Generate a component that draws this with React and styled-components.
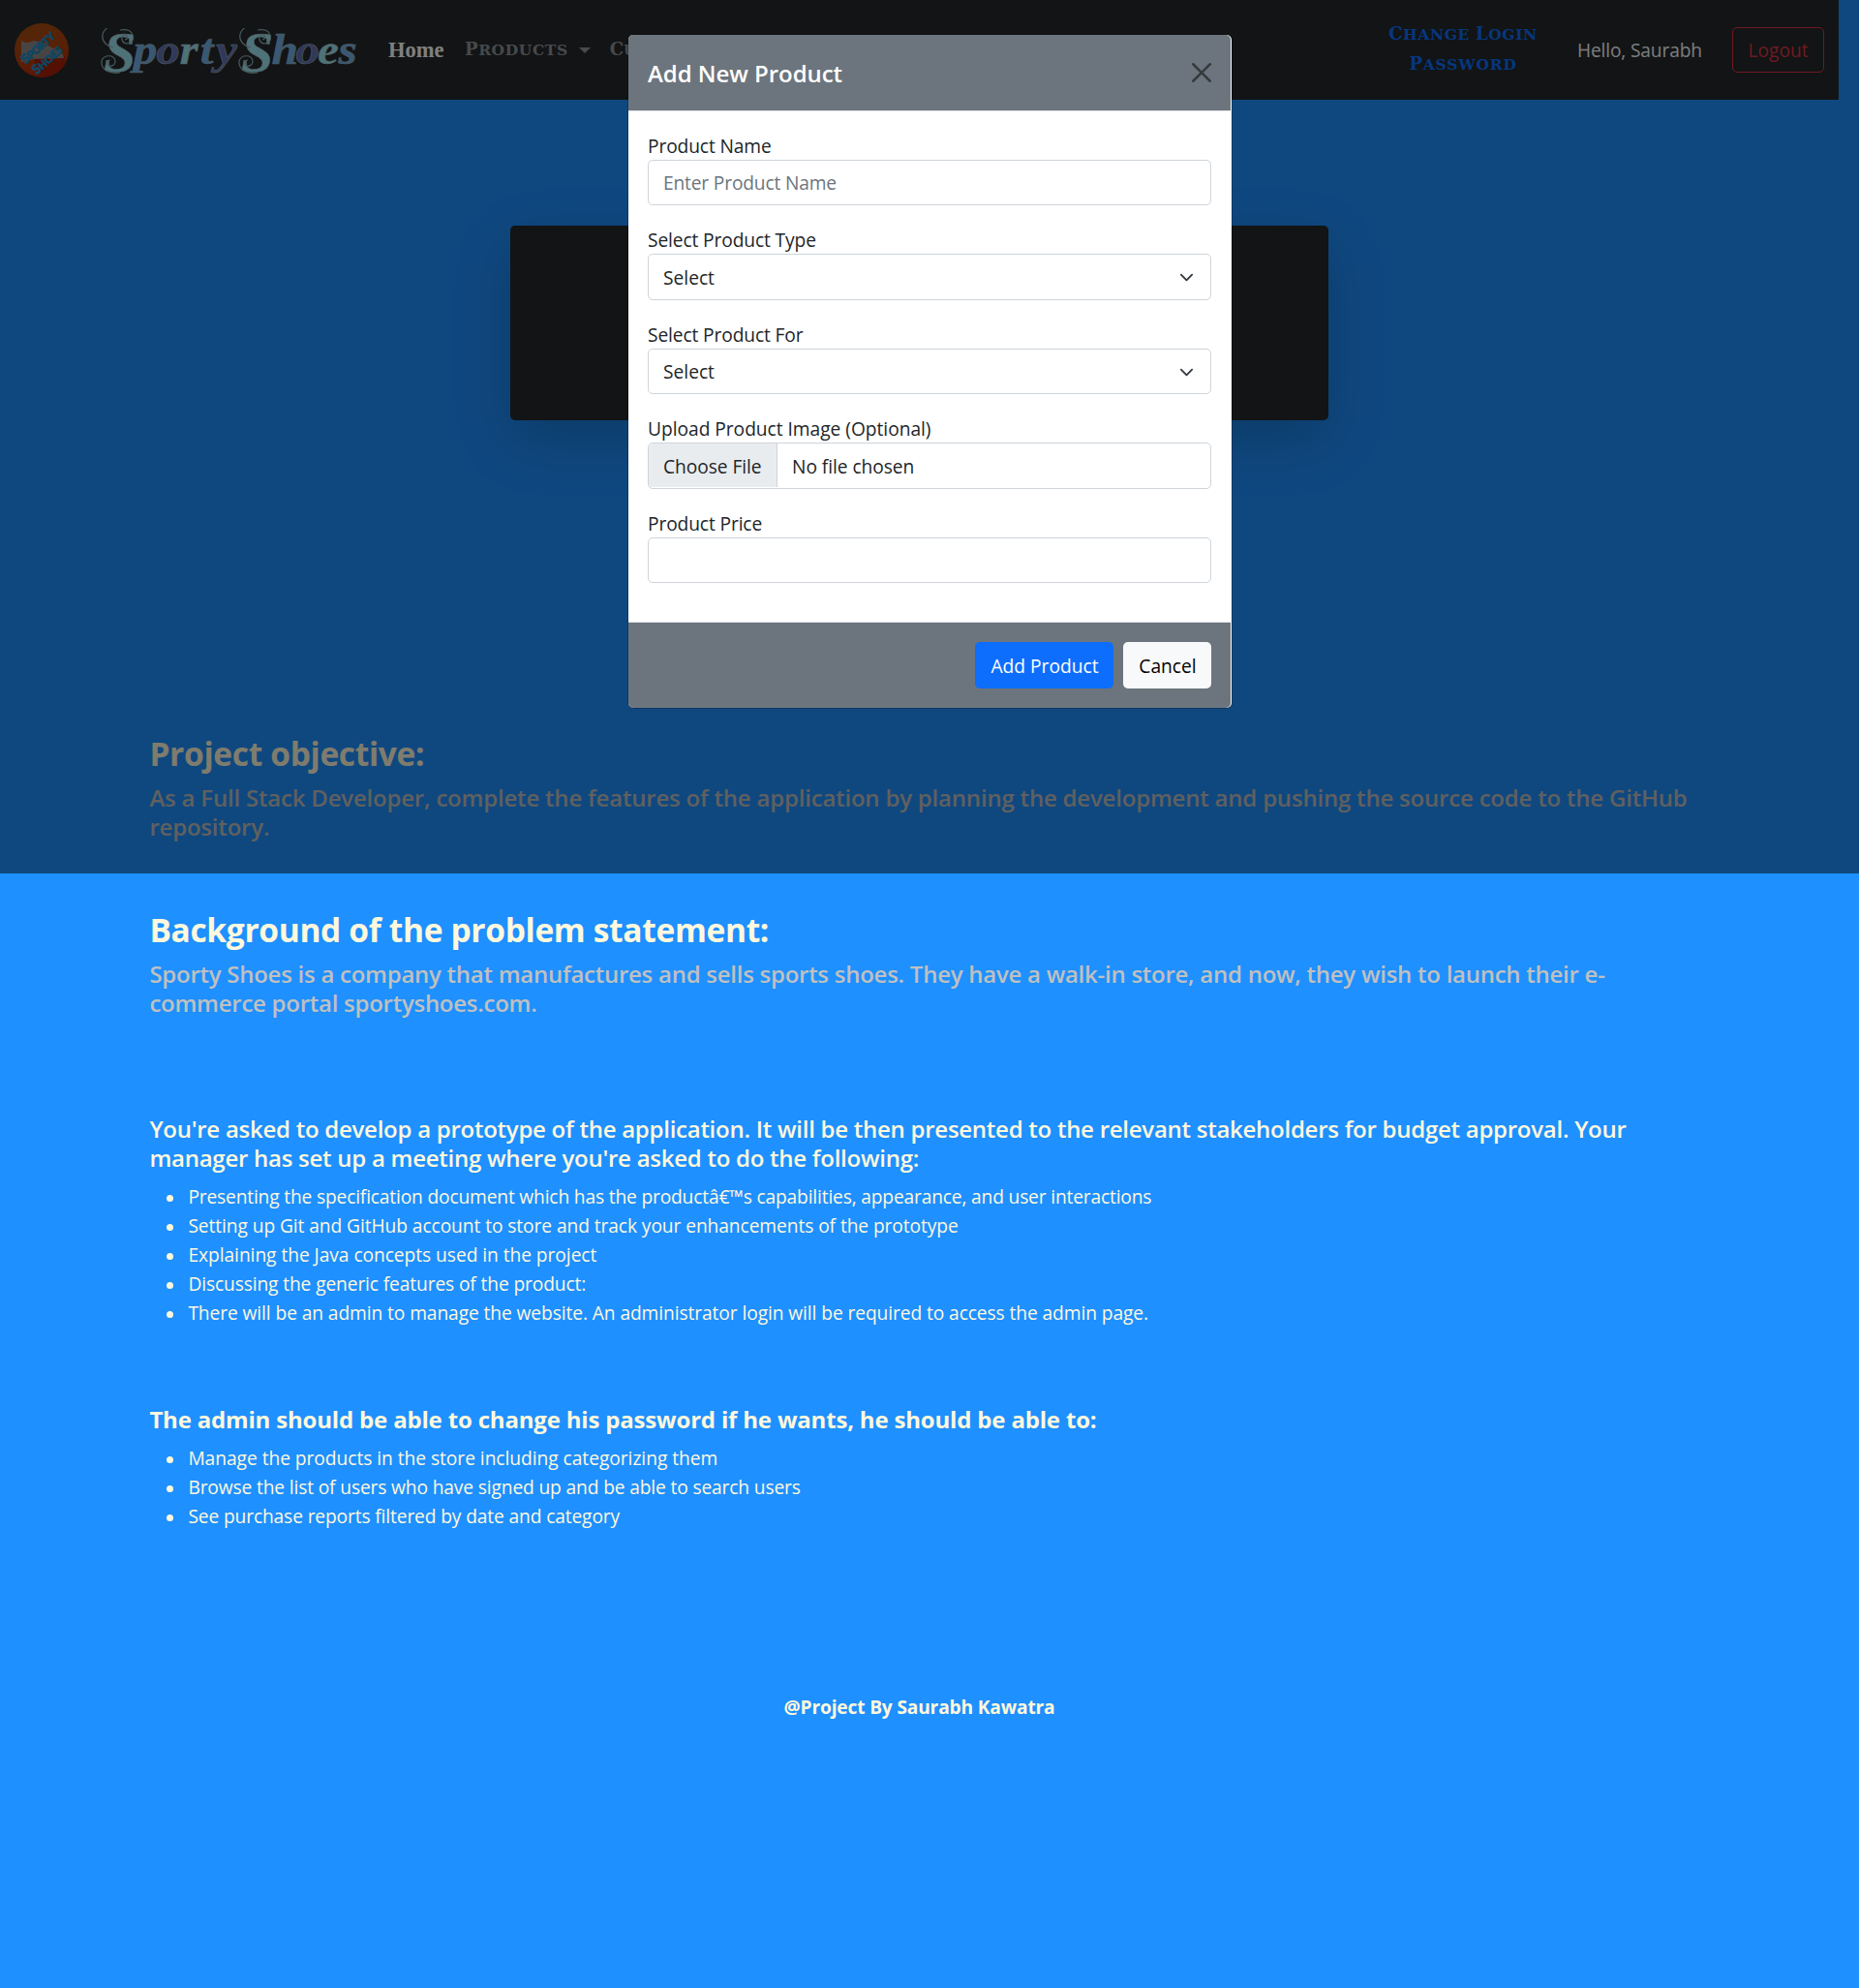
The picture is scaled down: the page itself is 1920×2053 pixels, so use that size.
import React from "react";
import styled, { createGlobalStyle } from "styled-components";

const GlobalStyle = createGlobalStyle`
  *, *::before, *::after { box-sizing: border-box; }
  html, body { margin: 0; background: #1e90ff; }
  body {
    font-family: "Open Sans", "Noto Sans", sans-serif;
    font-size: 19.2px;
    line-height: 30px;
    color: #212529;
  }
  h1, h2, h3, h4, h5, p, ul { margin: 0; }
`;

const Page = styled.div`
  position: relative;
  min-height: 2053px;
  background: #1e90ff;
`;

const Content = styled.div`
  width: 1899px;
`;

/* ---------- navigation ---------- */

const Navbar = styled.nav`
  display: flex;
  align-items: center;
  height: 103px;
  padding: 0 15px;
  background: #24282b;
`;

const LogoBox = styled.div`
  display: flex;
  width: 56px;
  height: 56px;
`;

const Brand = styled.div`
  display: flex;
  align-items: flex-start;
  height: 48px;
  margin: 2px 0 0 33px;
`;

const tones = { teal: "#9ae4f0", blue: "#70b0e6", navy: "#6072b2" };

const Letter = styled.span`
  flex: none;
  width: ${(p) => p.$w}px;
  font: italic 700 44px/46px "Liberation Serif", serif;
  color: ${(p) => tones[p.$tone]};
  -webkit-text-stroke: 0.5px #a8b8c0;
  text-align: center;
  transform: scaleX(1.12);
`;

const SwashBox = styled.span`
  position: relative;
  flex: none;
  width: ${(p) => p.$w}px;
  height: 48px;
`;

const SwashLetter = styled.span`
  display: block;
  padding-left: 3px;
  font: italic 700 60px/50px "Liberation Serif", serif;
  color: ${tones.teal};
  -webkit-text-stroke: 0.5px #a8b8c0;
`;

const SwashArt = styled.svg`
  position: absolute;
  left: 0;
  top: 0;
`;

const NavLinks = styled.div`
  display: flex;
  align-items: center;
  margin-left: 32px;
  gap: 20px;
`;

const HomeLink = styled.span`
  font: 700 22.5px/30px "Liberation Serif", serif;
  color: #fff;
  width: 59px;
`;

const CapLink = styled.span`
  display: flex;
  align-items: center;
  gap: 11px;
  color: rgba(255, 255, 255, 0.5);
`;

const CapWord = styled.span`
  display: inline-block;
  font: 700 15.5px/30px "DejaVu Serif", serif;
  letter-spacing: ${(p) => p.$ls || 0}px;
  text-transform: uppercase;
  &::first-letter { font-size: 18px; }
`;

const Caret = styled.span`
  border-top: 6px solid currentColor;
  border-left: 6px solid transparent;
  border-right: 6px solid transparent;
`;

const NavRight = styled.div`
  display: flex;
  align-items: center;
  margin-left: auto;
`;

const PasswordLink = styled.span`
  display: flex;
  flex-direction: column;
  align-items: center;
  width: 156px;
  margin: 0 40px 2px 0;
  color: #0d6efd;
`;

const WordRow = styled.span`
  display: flex;
  gap: 6px;
  white-space: nowrap;
`;

const Greeting = styled.span`
  width: 130px;
  margin: 1px 30px 0 0;
  letter-spacing: -0.16px;
  white-space: nowrap;
  color: #f8f9fa;
`;

const LogoutButton = styled.button`
  width: 95px;
  height: 47px;
  padding: 1px 0 0;
  border: 1px solid #dc3545;
  border-radius: 5px;
  background: transparent;
  font: inherit;
  color: #dc3545;
`;

/* ---------- page body ---------- */

const Card = styled.div`
  width: 845px;
  height: 201px;
  margin: 130px auto 0;
  border-radius: 5px;
  background: #24282b;
  box-shadow: 0 20px 60px rgba(0, 0, 0, 0.175);
`;

const Section = styled.section`
  margin-top: ${(p) => p.$gap}px;
  padding-left: 154.4px;
`;

const Title = styled.h2`
  margin-bottom: 10px;
  font-size: 33.5px;
  font-weight: 700;
  line-height: 42px;
  letter-spacing: -0.33px;
  color: cornsilk;
`;

const Lead = styled.h5`
  width: 1600px;
  font-size: 24px;
  font-weight: ${(p) => (p.$bold ? 700 : 600)};
  line-height: 30px;
  letter-spacing: ${(p) => p.$ls}px;
  color: ${(p) => (p.$muted ? "silver" : "cornsilk")};
`;

const List = styled.ul`
  margin-top: 10px;
  padding: 0;
  list-style: none;
  color: cornsilk;
`;

const Item = styled.li`
  display: flex;
  align-items: center;
  height: 30px;
  padding-left: 18px;
  letter-spacing: ${(p) => p.$ls}px;
  white-space: nowrap;
  &::before {
    content: "";
    width: 7px;
    height: 7px;
    margin: 2px 15px 0 0;
    border-radius: 50%;
    background: cornsilk;
  }
`;

const Footer = styled.footer`
  margin-top: 167px;
  text-align: center;
  font-weight: 700;
  letter-spacing: -0.18px;
  color: cornsilk;
`;

/* ---------- modal ---------- */

const Backdrop = styled.div`
  position: absolute;
  top: 0;
  left: 0;
  width: 1920px;
  height: 902px;
  padding: 35px 0 0 648px;
  background: rgba(0, 0, 0, 0.5);
`;

const Dialog = styled.div`
  width: 625px;
  height: 697px;
  border: 1px solid rgba(0, 0, 0, 0.2);
  border-radius: 6px;
  background: #fff;
  background-clip: padding-box;
`;

const DialogHeader = styled.div`
  display: flex;
  align-items: center;
  justify-content: space-between;
  height: 78.75px;
  margin-right: 1px;
  padding: 0 20px;
  border-bottom: 1px solid #dee2e6;
  border-radius: 5px 5px 0 0;
  background: #6c757d;
`;

const DialogTitle = styled.h5`
  padding-top: 2px;
  font-size: 24px;
  font-weight: 600;
  line-height: 37px;
  letter-spacing: -0.05px;
  color: #fff;
`;

const CloseIcon = styled.svg`
  display: block;
  width: 20px;
  height: 20px;
  opacity: 0.5;
`;

const DialogBody = styled.div`
  display: flex;
  flex-direction: column;
  gap: 20px;
  height: 527.5px;
  padding: 20px;
`;

const Field = styled.div`
  display: flex;
  flex-direction: column;
  width: 582px;
`;

const Label = styled.label`
  height: 30px;
  line-height: 32px;
  letter-spacing: ${(p) => p.$ls ?? -0.12}px;
`;

const TextInput = styled.input`
  height: 47.5px;
  padding: 0 15px;
  border: 1px solid #ced4da;
  border-radius: 5px;
  outline: none;
  font: inherit;
  letter-spacing: -0.17px;
  background: #fff;
  &::placeholder { color: #6c757d; opacity: 1; }
`;

const SelectBox = styled.div`
  display: flex;
  align-items: center;
  justify-content: space-between;
  height: 47.5px;
  padding: 1px 17.5px 0 15px;
  border: 1px solid #ced4da;
  border-radius: 5px;
`;

const FileBox = styled.div`
  display: flex;
  height: 47.5px;
  border: 1px solid #ced4da;
  border-radius: 5px;
  overflow: hidden;
  line-height: 47px;
  letter-spacing: -0.06px;
`;

const FileButton = styled.span`
  width: 133px;
  height: 45px;
  padding-left: 15px;
  border-right: 1px solid #ced4da;
  background: #e9ecef;
`;

const FileName = styled.span`
  padding-left: 15px;
`;

const DialogFooter = styled.div`
  display: flex;
  justify-content: flex-end;
  align-items: center;
  gap: 10px;
  height: 88.75px;
  margin-right: 1px;
  padding: 0 20px;
  border-top: 1px solid #dee2e6;
  border-radius: 0 0 5px 5px;
  background: #6c757d;
`;

const Button = styled.button`
  width: ${(p) => p.$w}px;
  height: 47.5px;
  padding: 2px 0 0 1px;
  border: 0;
  border-radius: 5px;
  font: inherit;
  color: ${(p) => (p.$primary ? "#fff" : "#000")};
  background: ${(p) => (p.$primary ? "#0d6efd" : "#f8f9fa")};
`;

function Logo() {
  return (
    <LogoBox>
      <svg width="56" height="56" viewBox="0 0 56 56">
        <defs>
          <linearGradient id="ball" x1="0" y1="0" x2="0.4" y2="1">
            <stop offset="0.2" stopColor="#a84c12" />
            <stop offset="0.65" stopColor="#b0420e" />
            <stop offset="1" stopColor="#b82808" />
          </linearGradient>
          <clipPath id="round"><circle cx="28" cy="28" r="28" /></clipPath>
        </defs>
        <circle cx="28" cy="28" r="28" fill="url(#ball)" />
        <g clipPath="url(#round)">
          <path d="M20 37L52 34V50L28 58Z" fill="#a82006" />
          <path d="M7 18Q13 22 19 18L30 20L40 26Q50 28 51 36L20 37L7 40Z" fill="#8f8a88" />
        </g>
        <g fill="#1a9ad8" stroke="#1a84b8" strokeWidth="0.7" fontFamily="Lato, sans-serif" fontWeight="900">
          <text transform="translate(11.500 42.500) rotate(-42)" fontSize="11" textLength="42">
            <tspan fontSize="13.500">S</tspan>PORTY
          </text>
          <text transform="translate(23 53.500) rotate(-42)" fontSize="11" textLength="37">
            <tspan fontSize="13.500">S</tspan>HOES
          </text>
        </g>
      </svg>
    </LogoBox>
  );
}

function SwashS({ w }) {
  return (
    <SwashBox $w={w}>
      <SwashLetter>S</SwashLetter>
      <SwashArt width="36" height="48" viewBox="0 0 36 48" fill="none" stroke="#90b4ba" strokeWidth="1.2">
        <path d="M6.500 0C1 4 0 11 5 16Q8 19 13 20" />
        <path d="M20 2Q32 0 33.500 9C34 17 24 18 22 12C21 6 27 5 27.500 9Q27.500 12 25 12" />
        <path d="M20 46C8 48 0 42 1 34C3 27 14 27 15 34C15 40 7 41 7 36Q7 33 10 33" />
      </SwashArt>
    </SwashBox>
  );
}

function Chevron() {
  return (
    <svg width="15" height="15" viewBox="0 0 16 16" fill="none">
      <path d="M2 5l6 6 6-6" stroke="#343a40" strokeWidth="2" strokeLinecap="round" strokeLinejoin="round" />
    </svg>
  );
}

const word1 = [["p", "blue", 24], ["o", "navy", 23], ["r", "teal", 20], ["t", "blue", 17], ["y", "navy", 24]];
const word2 = [["h", "blue", 24], ["o", "navy", 23], ["e", "teal", 20], ["s", "blue", 20]];

const tasks = [
  ["Presenting the specification document which has the productâ€™s capabilities, appearance, and user interactions", -0.165],
  ["Setting up Git and GitHub account to store and track your enhancements of the prototype", -0.08],
  ["Explaining the Java concepts used in the project", -0.05],
  ["Discussing the generic features of the product:", -0.12],
  ["There will be an admin to manage the website. An administrator login will be required to access the admin page.", -0.09],
];

const adminTasks = [
  ["Manage the products in the store including categorizing them", -0.04],
  ["Browse the list of users who have signed up and be able to search users", -0.14],
  ["See purchase reports filtered by date and category", -0.13],
];

export default function App() {
  return (
    <Page>
      <GlobalStyle />
      <Content>
        <Navbar>
          <Logo />
          <Brand>
            <SwashS w={34} />
            {word1.map(([c, tone, w]) => <Letter key={c} $tone={tone} $w={w}>{c}</Letter>)}
            <SwashS w={36} />
            {word2.map(([c, tone, w]) => <Letter key={c} $tone={tone} $w={w}>{c}</Letter>)}
          </Brand>
          <NavLinks>
            <HomeLink>Home</HomeLink>
            <CapLink><CapWord $ls={0.6}>Products</CapWord><Caret /></CapLink>
            <CapLink><CapWord>Customers</CapWord></CapLink>
          </NavLinks>
          <NavRight>
            <PasswordLink>
              <WordRow><CapWord $ls={0.6}>Change</CapWord><CapWord $ls={0.6}>Login</CapWord></WordRow>
              <WordRow><CapWord $ls={0.8}>Password</CapWord></WordRow>
            </PasswordLink>
            <Greeting>Hello, Saurabh</Greeting>
            <LogoutButton>Logout</LogoutButton>
          </NavRight>
        </Navbar>

        <Card />

        <Section $gap={323}>
          <Title>Project objective:</Title>
          <Lead $muted $ls={-0.2}>
            As a Full Stack Developer, complete the features of the application by planning the development and
            pushing the source code to the GitHub repository.
          </Lead>
        </Section>
        <Section $gap={70}>
          <Title>Background of the problem statement:</Title>
          <Lead $muted $ls={-0.26}>
            Sporty Shoes is a company that manufactures and sells sports shoes. They have a walk-in store, and now,
            they wish to launch their e-commerce portal sportyshoes.com.
          </Lead>
        </Section>
        <Section $gap={100}>
          <Lead $ls={-0.26}>
            You're asked to develop a prototype of the application. It will be then presented to the relevant
            stakeholders for budget approval. Your manager has set up a meeting where you're asked to do the
            following:
          </Lead>
          <List>
            {tasks.map(([text, ls]) => <Item key={text} $ls={ls}>{text}</Item>)}
          </List>
        </Section>
        <Section $gap={80}>
          <Lead $bold $ls={-0.18}>
            The admin should be able to change his password if he wants, he should be able to:
          </Lead>
          <List>
            {adminTasks.map(([text, ls]) => <Item key={text} $ls={ls}>{text}</Item>)}
          </List>
        </Section>
        <Footer>@Project By Saurabh Kawatra</Footer>
      </Content>

      <Backdrop>
        <Dialog>
          <DialogHeader>
            <DialogTitle>Add New Product</DialogTitle>
            <CloseIcon viewBox="0 0 16 16">
              <path d="M.293.293a1 1 0 0 1 1.414 0L8 6.586 14.293.293a1 1 0 1 1 1.414 1.414L9.414 8l6.293 6.293a1 1 0 0 1-1.414 1.414L8 9.414l-6.293 6.293a1 1 0 0 1-1.414-1.414L6.586 8 .293 1.707a1 1 0 0 1 0-1.414z" />
            </CloseIcon>
          </DialogHeader>
          <DialogBody>
            <Field>
              <Label>Product Name</Label>
              <TextInput placeholder="Enter Product Name" />
            </Field>
            <Field>
              <Label>Select Product Type</Label>
              <SelectBox>Select<Chevron /></SelectBox>
            </Field>
            <Field>
              <Label>Select Product For</Label>
              <SelectBox>Select<Chevron /></SelectBox>
            </Field>
            <Field>
              <Label $ls={-0.03}>Upload Product Image (Optional)</Label>
              <FileBox>
                <FileButton>Choose File</FileButton>
                <FileName>No file chosen</FileName>
              </FileBox>
            </Field>
            <Field>
              <Label>Product Price</Label>
              <TextInput />
            </Field>
          </DialogBody>
          <DialogFooter>
            <Button $primary $w={143}>Add Product</Button>
            <Button $w={91}>Cancel</Button>
          </DialogFooter>
        </Dialog>
      </Backdrop>
    </Page>
  );
}
